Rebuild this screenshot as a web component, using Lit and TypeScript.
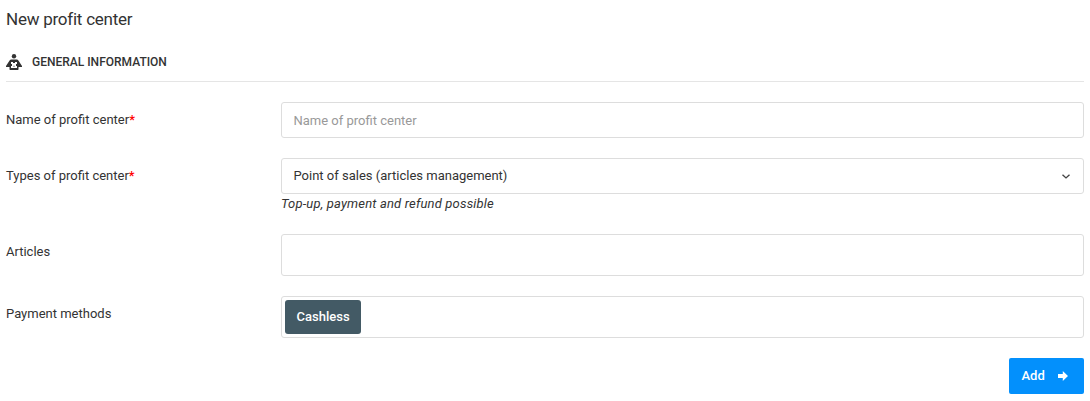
import { LitElement, html, css, svg } from "lit";
import { customElement } from "lit/decorators.js";

const readerIcon = svg`<circle cx="8" cy="2.300" r="2.200"/>
  <path fill-rule="evenodd" d="M5.300 5.500h5.400c.8 0 1.300.3 1.700.9L16 12v1h-3.500v2.300c0 .5-.2.7-.6.7H4.100c-.4 0-.6-.2-.6-.7V13H0v-1l3.600-5.600c.4-.6.9-.9 1.700-.9zM5 8v2h1v2H5v2h6v-2h-1v-2h1V8H9v1H7V8z"/>
  <path d="M7.500 11.800h1v1h-1z"/>`;

@customElement("app-root")
export class AppRoot extends LitElement {
  static styles = css`
    :host {
      display: block;
      box-sizing: border-box;
      height: 401px;
      padding: 9px 6px 0;
      background: #fff;
      color: #333;
      font: 400 13px/20px Roboto, sans-serif;
      letter-spacing: 0;
    }
    * { box-sizing: border-box; }
    h1 {
      margin: 0;
      font-size: 17px;
      font-weight: 400;
      line-height: 20px;
      letter-spacing: -0.24px;
    }
    .legend {
      display: flex;
      align-items: center;
      gap: 10px;
      height: 41px;
      margin: 12px 0 20px;
      padding-top: 1px;
      border-bottom: 1px solid #e5e5e5;
      font-size: 12px;
      font-weight: 500;
      text-transform: uppercase;
    }
    .legend svg { width: 16px; height: 16px; fill: #333; }
    .row {
      display: grid;
      grid-template-columns: 275px 1fr;
      margin-bottom: 20px;
    }
    .label { padding-top: 8px; }
    .required { color: #f00; font-weight: 500; }
    .control {
      display: flex;
      align-items: center;
      width: 100%;
      height: 36px;
      padding: 0 11.500px;
      border: 1px solid #ddd;
      border-radius: 3px;
      background: #fff;
      font: inherit;
      letter-spacing: inherit;
      color: #333;
      outline: none;
    }
    .control::placeholder { color: #999; opacity: 1; }
    .select { justify-content: space-between; padding-right: 13px; }
    .select svg { width: 8px; height: 5px; fill: none; stroke: #444; stroke-width: 1.4; }
    .help { display: block; font-style: italic; letter-spacing: 0.17px; }
    .tags { height: 42px; padding: 0 3px; }
    .tag {
      display: flex;
      align-items: center;
      height: 34px;
      padding: 0 11.500px;
      border-radius: 3px;
      background: #435a65;
      color: #fff;
      font-weight: 500;
    }
    .actions { display: flex; justify-content: flex-end; }
    button {
      display: flex;
      align-items: center;
      justify-content: space-between;
      width: 75px;
      height: 36px;
      padding: 0 16px 0 12.500px;
      border: 0;
      border-radius: 2px;
      background: #0390fc;
      color: #fff;
      font: 500 13px/20px Roboto, sans-serif;
    }
    button svg { width: 10px; height: 10px; fill: #fff; }
  `;

  private label(text: string, required = false) {
    return html`<div class="label">${text}${required ? html`<span class="required">*</span>` : ""}</div>`;
  }

  render() {
    return html`
      <h1>New profit center</h1>
      <div class="legend"><svg viewBox="0 0 16 16">${readerIcon}</svg><span>General information</span></div>
      <div class="row">
        ${this.label("Name of profit center", true)}
        <input class="control" placeholder="Name of profit center" />
      </div>
      <div class="row">
        ${this.label("Types of profit center", true)}
        <div>
          <div class="control select"><span>Point of sales (articles management)</span>
            <svg viewBox="0 0 8 5"><path d="M.5.7 4 3.900 7.500.7"/></svg>
          </div>
          <span class="help">Top-up, payment and refund possible</span>
        </div>
      </div>
      <div class="row">${this.label("Articles")}<div class="control tags"></div></div>
      <div class="row">${this.label("Payment methods")}
        <div class="control tags"><span class="tag">Cashless</span></div>
      </div>
      <div class="actions">
        <button><span>Add</span><svg viewBox="0 0 10 10"><path d="M0 3h4.800V0L10 5l-5.200 5V7H0z"/></svg></button>
      </div>
    `;
  }
}
